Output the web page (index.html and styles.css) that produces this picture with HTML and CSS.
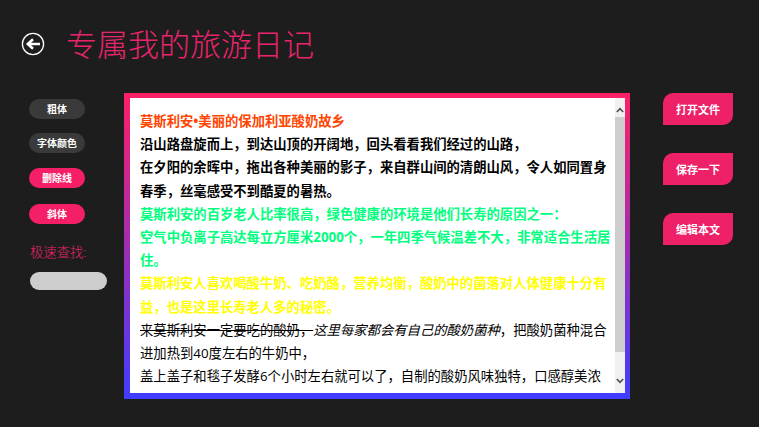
FILE: index.html
```html
<!DOCTYPE html>
<html lang="zh-CN">
<head>
  <meta charset="UTF-8">
  <title>专属我的旅游日记</title>
  <link rel="stylesheet" href="styles.css">
</head>
<body>
  <header class="top">
    <svg class="back" width="24" height="24" viewBox="0 0 24 24">
      <circle cx="12" cy="12" r="10.6" fill="none" stroke="#fff" stroke-width="1.3"/>
      <path d="M19 12H7.5M12 7.2L6.8 12l5.2 4.8" fill="none" stroke="#fff" stroke-width="2.6"/>
    </svg>
    <h1>专属我的旅游日记</h1>
  </header>

  <main class="content">
    <aside class="tools">
      <button class="pill dark">粗体</button>
      <button class="pill dark second">字体颜色</button>
      <button class="pill pink third">删除线</button>
      <button class="pill pink fourth">斜体</button>
      <label class="search-label">极速查找:</label>
      <div class="search"></div>
    </aside>

    <section class="frame">
      <div class="paper">
        <div class="text">
          <p class="bold orange">莫斯利安•美丽的保加利亚酸奶故乡</p>
          <p class="bold">沿山路盘旋而上，到达山顶的开阔地，回头看看我们经过的山路，</p>
          <p class="bold">在夕阳的余晖中，拖出各种美丽的影子，来自群山间的清朗山风，令人如同置身春季，丝毫感受不到酷夏的暑热。</p>
          <p class="bold green">莫斯利安的百岁老人比率很高，绿色健康的环境是他们长寿的原因之一：</p>
          <p class="bold green">空气中负离子高达每立方厘米2000个，一年四季气候温差不大，非常适合生活居住。</p>
          <p class="bold yellow">莫斯利安人喜欢喝酸牛奶、吃奶酪，营养均衡，酸奶中的菌落对人体健康十分有益，也是这里长寿老人多的秘密。</p>
          <p><s>来莫斯利安一定要吃的酸奶，</s><em>这里每家都会有自己的酸奶菌种</em>，把酸奶菌种混合进加热到40度左右的牛奶中，</p>
          <p>盖上盖子和毯子发酵6个小时左右就可以了，自制的酸奶风味独特，口感醇美浓</p>
        </div>
        <div class="scrollbar">
          <div class="arrow up">
            <svg width="8" height="6" viewBox="0 0 8 6"><path d="M.8 5L4 1.6 7.2 5" fill="none" stroke="#505050" stroke-width="1.6"/></svg>
          </div>
          <div class="thumb"></div>
          <div class="rest"></div>
          <div class="arrow down">
            <svg width="8" height="6" viewBox="0 0 8 6"><path d="M.8 1L4 4.4 7.2 1" fill="none" stroke="#505050" stroke-width="1.6"/></svg>
          </div>
        </div>
      </div>
    </section>

    <aside class="actions">
      <button class="action">打开文件</button>
      <button class="action">保存一下</button>
      <button class="action">编辑本文</button>
    </aside>
  </main>
</body>
</html>
```

FILE: styles.css
```css
html, body {
  height: 100%;
}

body {
  margin: 0;
  overflow: hidden;
  background-color: #1d1d1d;
  color: #fff;
  font-family: "Open Sans", "Noto Sans CJK SC", sans-serif;
}

.top {
  display: flex;
  align-items: center;
  height: 88px;
  padding-left: 21px;
}

.back {
  flex: none;
}

h1 {
  margin: 0 0 0 21px;
  font-size: 31px;
  font-weight: 300;
  color: #e8246c;
  line-height: 88px;
}

.content {
  display: flex;
  align-items: flex-start;
  padding-top: 5px;
}

.tools {
  display: flex;
  flex-direction: column;
  align-items: flex-start;
  flex: none;
  width: 95px;
  padding: 6px 0 0 29px;
}

.pill {
  width: 56px;
  height: 20px;
  padding: 0;
  border: 0;
  border-radius: 10px;
  color: #fff;
  font-family: inherit;
  font-size: 10px;
  font-weight: 700;
  line-height: 20px;
}

.dark {
  background-color: #3a3a3a;
}

.pink {
  background-color: #f41f66;
}

.second {
  margin-top: 14px;
}

.third {
  margin-top: 15px;
}

.fourth {
  margin-top: 16px;
}

.search-label {
  margin: 18px 0 0 1px;
  color: #e8246c;
  font-size: 13.33px;
  font-weight: 300;
  line-height: 20px;
}

.search {
  width: 77px;
  height: 18px;
  margin: 10px 0 0 1px;
  border-radius: 9px;
  background-color: #cdcdcd;
}

.frame {
  flex: none;
  box-sizing: border-box;
  width: 506px;
  height: 306px;
  padding: 5px 5px 6px 6px;
  background: linear-gradient(#ff1f66, #3f3dff);
}

.paper {
  display: flex;
  height: 100%;
  background-color: #fff;
}

.text {
  flex: 1;
  overflow: hidden;
  padding: 12px 0 0 10px;
  color: #000;
  font-size: 13.33px;
  line-height: 23.2px;
}

.text p {
  margin: 0;
}

.bold {
  font-weight: 700;
}

.orange {
  color: #ff4500;
}

.green {
  color: #00ff7f;
}

.yellow {
  color: #ffff00;
}

.scrollbar {
  display: flex;
  flex-direction: column;
  flex: none;
  width: 10px;
  background-color: #f0f0f0;
}

.arrow {
  display: flex;
  justify-content: center;
  align-items: center;
  flex: none;
  box-sizing: border-box;
  height: 19px;
}

.up {
  padding-top: 5px;
}

.down {
  padding-bottom: 5px;
}

.thumb {
  height: 235px;
  background-color: #cdcdcd;
}

.rest {
  flex: 1;
}

.actions {
  display: flex;
  flex-direction: column;
  flex: none;
  gap: 28px;
  width: 70px;
  margin-left: 33px;
}

.action {
  width: 70px;
  height: 32px;
  padding: 0;
  border: 0;
  border-radius: 10px 0 10px 0;
  background-color: #ee2068;
  color: #fff;
  font-family: inherit;
  font-size: 11px;
  font-weight: 700;
}
```
